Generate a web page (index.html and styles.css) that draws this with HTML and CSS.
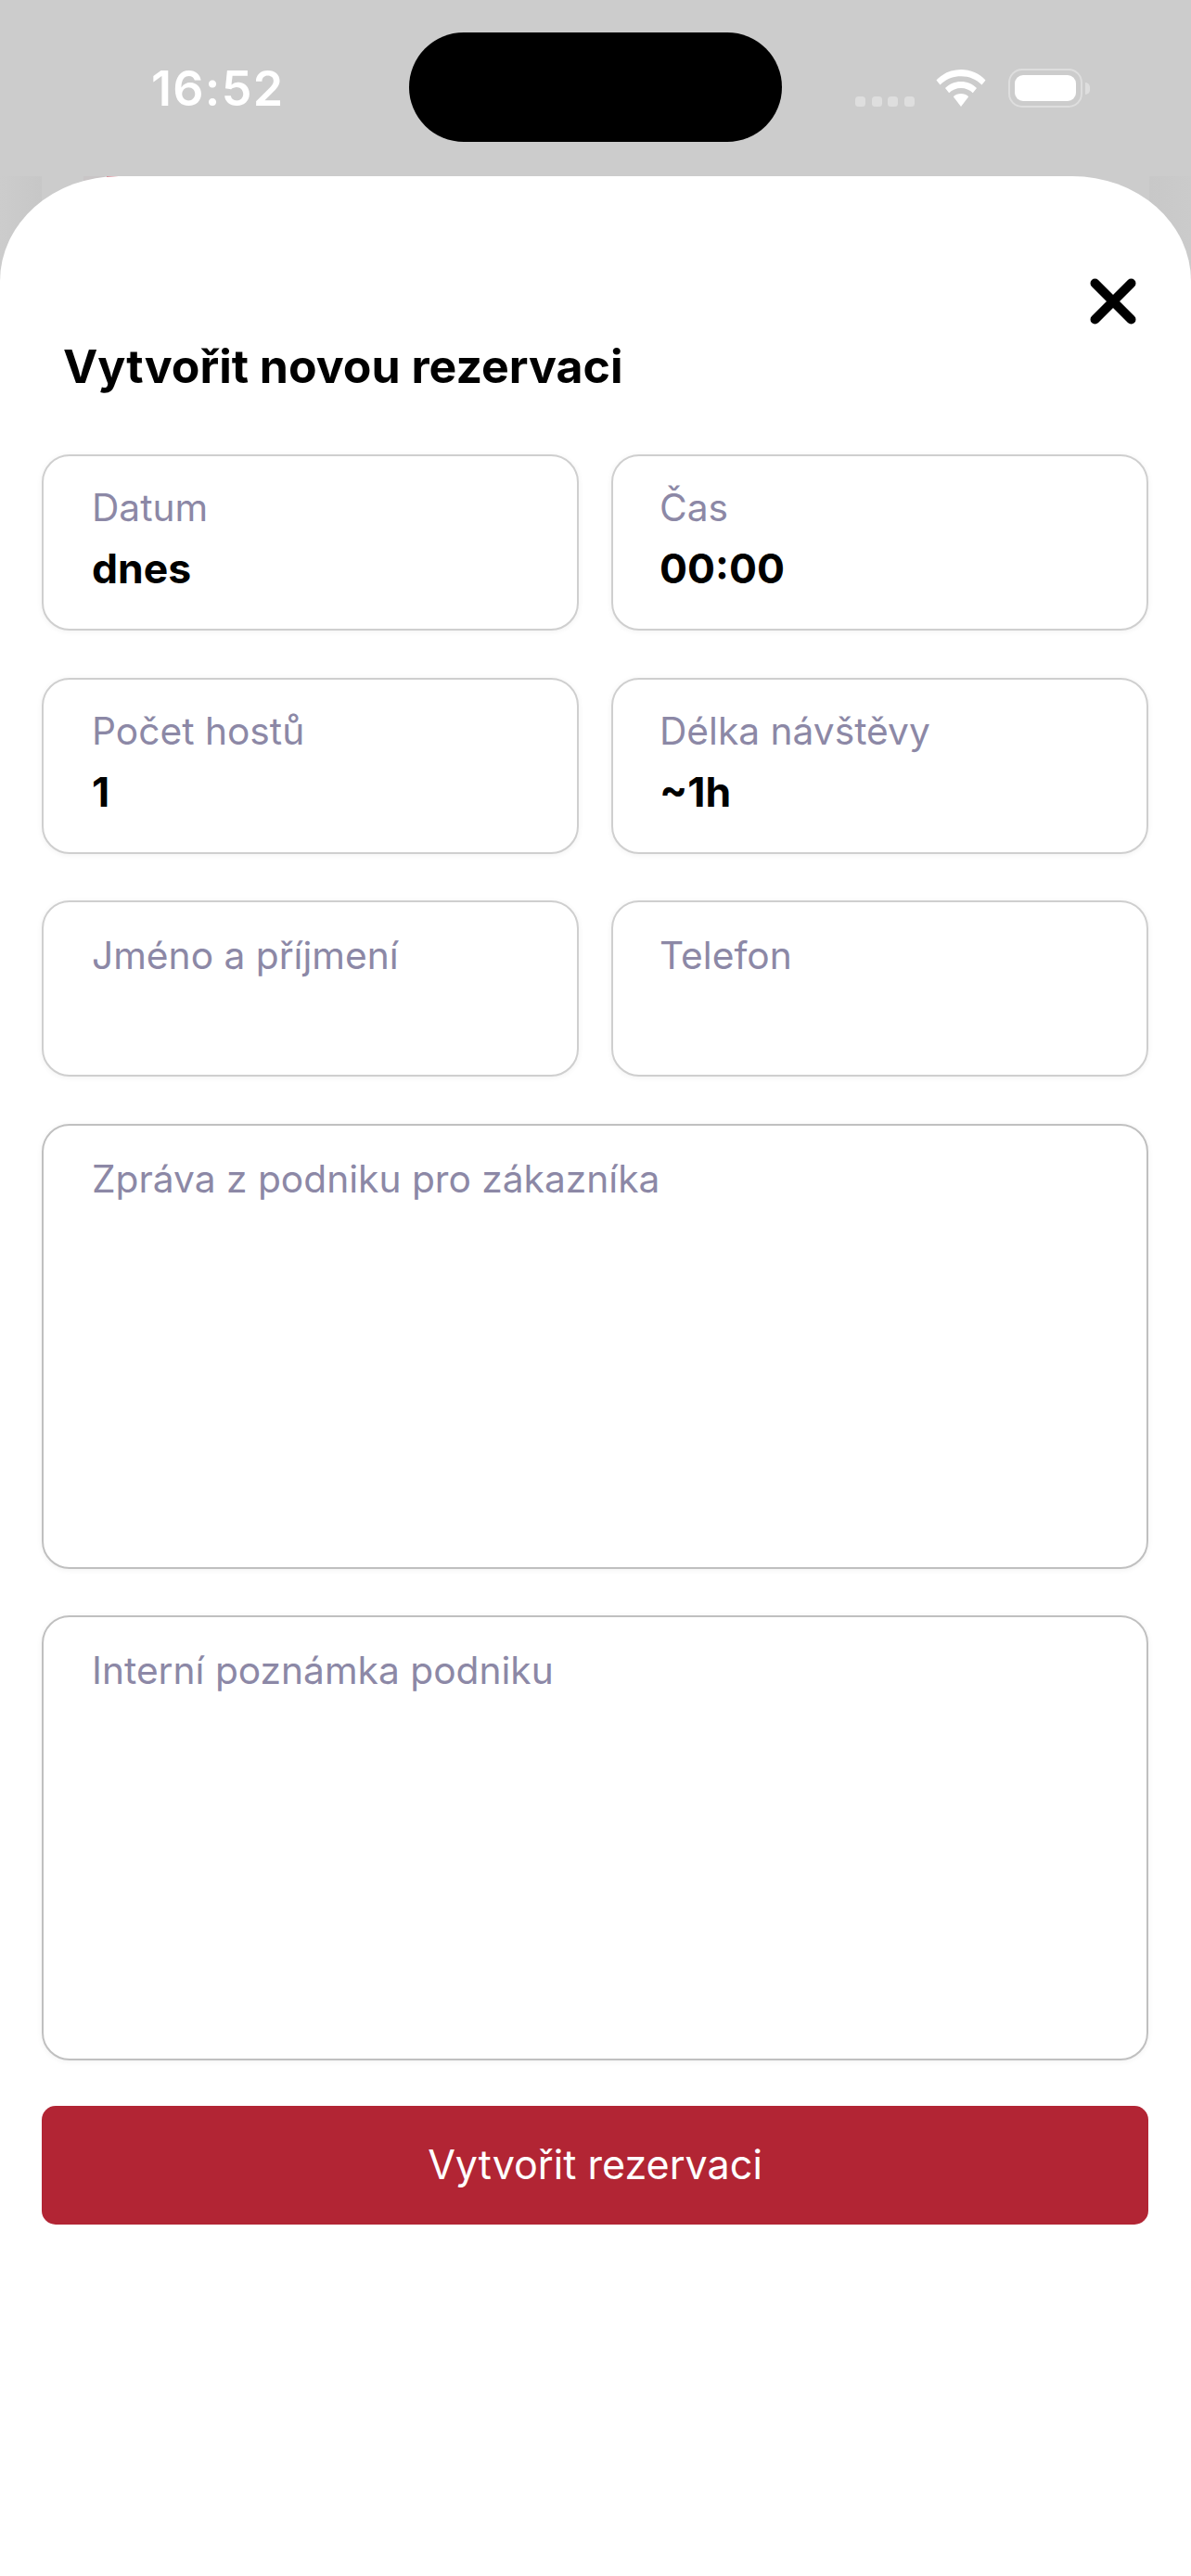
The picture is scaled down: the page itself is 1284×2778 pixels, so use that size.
FILE: index.html
```html
<!DOCTYPE html>
<html lang="cs">
<head>
<meta charset="utf-8">
<title>Vytvořit novou rezervaci</title>
<link rel="stylesheet" href="styles.css">
</head>
<body>
<div class="screen">
  <div class="behind">
    <span class="strip strip-a"></span>
    <span class="strip strip-b"></span>
    <span class="strip strip-c"></span>
    <span class="strip strip-d"></span>
  </div>
  <header class="status">
    <span class="time">16:52</span>
    <span class="island"></span>
    <div class="indicators">
      <div class="signal"><i></i><i></i><i></i><i></i></div>
      <svg class="wifi" viewBox="0 0 54 40" aria-hidden="true">
        <path d="M27 0C16.500 0 7.500 4 0.500 11.500L4.500 16.500C10.500 10.500 18 7.200 27 7.200C36 7.200 43.500 10.500 49.500 16.500L53.500 11.500C46.500 4 37.500 0 27 0Z"/>
        <path d="M27 13C20.500 13 14.500 15.500 10 20L14.200 25.200C17.500 22 22 20 27 20C32 20 36.500 22 39.800 25.200L44 20C39.500 15.500 33.500 13 27 13Z"/>
        <path d="M27 26C23.800 26 21 27.200 18.800 29.200L27 40L35.200 29.200C33 27.200 30.200 26 27 26Z"/>
      </svg>
      <div class="battery"><span class="battery-fill"></span></div>
      <span class="battery-cap"></span>
    </div>
  </header>
  <main class="sheet">
    <div class="sheet-head">
      <svg class="close" viewBox="0 0 50 50" aria-hidden="true">
        <path d="M5.500 5.500L44.500 44.500M44.500 5.500L5.500 44.500"/>
      </svg>
    </div>
    <h1 class="title">Vytvořit novou rezervaci</h1>
    <form class="form">
      <div class="field"><span class="label">Datum</span><span class="value">dnes</span></div>
      <div class="field field-right"><span class="label">Čas</span><span class="value">00:00</span></div>
      <div class="field"><span class="label">Počet hostů</span><span class="value">1</span></div>
      <div class="field field-right"><span class="label">Délka návštěvy</span><span class="value">~1h</span></div>
      <div class="field field-empty"><span class="label">Jméno a příjmení</span></div>
      <div class="field field-empty field-right"><span class="label">Telefon</span></div>
      <div class="field field-empty field-area"><span class="label">Zpráva z podniku pro zákazníka</span></div>
      <div class="field field-empty field-area"><span class="label">Interní poznámka podniku</span></div>
      <button class="submit" type="button">Vytvořit rezervaci</button>
    </form>
  </main>
</div>
</body>
</html>
```
FILE: styles.css
```css
* { box-sizing: border-box; }
html, body { margin: 0; padding: 0; }
body {
  width: 1284px;
  height: 2778px;
  overflow: hidden;
  background: #cccccc;
  font-family: Inter, "Noto Sans", sans-serif;
}
.screen {
  position: relative;
  display: flex;
  flex-direction: column;
  width: 1284px;
  height: 2778px;
}
.behind {
  position: absolute;
  left: 0;
  right: 0;
  top: 190px;
  height: 120px;
}
.strip { position: absolute; top: 0; height: 120px; }
.strip-a { left: 0; width: 45px; background: linear-gradient(90deg, #cccccc, #c7c7c7); }
.strip-b { left: 90px; width: 25px; height: 12px; background: #c9c5c6; }
.strip-c { left: 115px; width: 17px; height: 3px; background: #b01c30; }
.strip-d { right: 0; width: 45px; background: linear-gradient(90deg, #c8c8c8, #cbcbcb); }

.status {
  position: relative;
  display: flex;
  align-items: flex-start;
  height: 190px;
  flex: none;
}
.time {
  margin: 66px 0 0 163px;
  width: 145px;
  font-size: 52px;
  line-height: 60px;
  font-weight: 600;
  color: #fff;
  letter-spacing: 1.300px;
}
.island {
  width: 402px;
  height: 118px;
  margin: 35px 0 0 133px;
  border-radius: 59px;
  background: #000;
}
.indicators {
  display: flex;
  align-items: flex-start;
  margin-left: 79px;
  padding-top: 74px;
}
.signal {
  display: flex;
  gap: 6.500px;
  margin-top: 30px;
}
.signal i {
  display: block;
  width: 11px;
  height: 11px;
  border-radius: 3.500px;
  background: #dedede;
}
.wifi {
  width: 54px;
  height: 40px;
  margin: 1px 0 0 23px;
  fill: #fff;
}
.battery {
  width: 80px;
  height: 42px;
  margin-left: 24px;
  padding: 5px;
  border: 2.500px solid #dedede;
  border-radius: 15px;
}
.battery-fill {
  display: block;
  height: 100%;
  border-radius: 9px;
  background: #fff;
}
.battery-cap {
  width: 5px;
  height: 13px;
  margin: 15px 0 0 3px;
  border-radius: 0 6px 6px 0;
  background: #dedede;
}

.sheet {
  position: relative;
  flex: 1;
  display: flex;
  flex-direction: column;
  padding: 0 45px;
  border-radius: 128px 128px 0 0 / 113px 113px 0 0;
  background: #fff;
}
.sheet-head {
  display: flex;
  justify-content: flex-end;
  height: 110px;
  padding: 110px 14px 0 0;
}
.close {
  flex: none;
  width: 50px;
  height: 50px;
  fill: none;
  stroke: #000;
  stroke-width: 10;
  stroke-linecap: round;
}
.title {
  margin: 0 0 0 23px;
  height: 190px;
  padding-top: 65px;
  font-size: 50px;
  line-height: 60px;
  font-weight: 700;
  color: #000;
}
.form {
  display: grid;
  grid-template-columns: 579px 579px;
  column-gap: 35px;
  row-gap: 50.500px;
}
.field {
  display: flex;
  flex-direction: column;
  height: 190px;
  padding: 31px 52px 0;
  border: 2px solid #cfcfcf;
  border-radius: 30px;
  background: #fff;
  box-shadow: 0 1px 6px rgba(0, 0, 0, 0.06);
}
.field-right { padding-left: 50px; }
.field-empty { padding-top: 33px; }
.field-area {
  grid-column: 1 / -1;
  height: 480px;
  border-color: #c0c0c0;
}
.label {
  font-size: 40.700px;
  line-height: 50px;
  font-weight: 400;
  color: #8c88a6;
}
.value {
  margin-top: 14px;
  font-size: 44.500px;
  line-height: 52px;
  font-weight: 700;
  color: #000;
}
.submit {
  grid-column: 1 / -1;
  height: 128px;
  margin-top: -2px;
  padding: 0 0 2px;
  border: 0;
  border-radius: 15px;
  background: #b22534;
  color: #fff;
  font-family: inherit;
  font-size: 43.100px;
  font-weight: 400;
}
```
